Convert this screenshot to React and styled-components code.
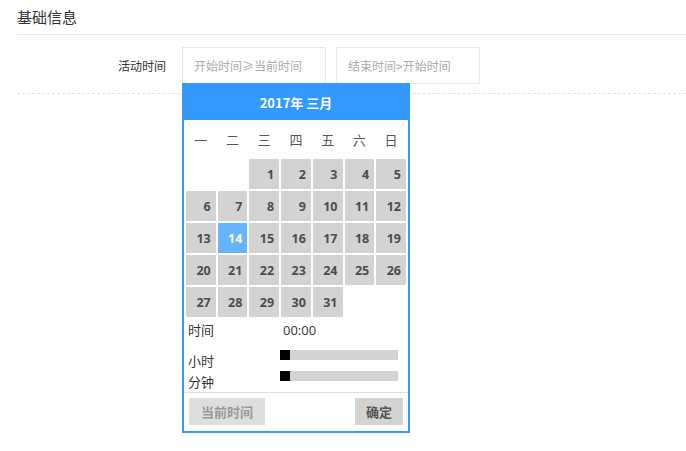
import React from "react";
import styled, { createGlobalStyle } from "styled-components";

const Global = createGlobalStyle`
  html, body { margin: 0; padding: 0; background: #fff; }
  body { font-family: "Noto Sans CJK SC", "Open Sans", sans-serif; color: #333; }
  * { box-sizing: border-box; }
`;

const Page = styled.div`
  padding-left: 17px;
  width: 686px;
  height: 451px;
  overflow: hidden;
`;

const Title = styled.div`
  height: 35px;
  line-height: 33px;
  font-size: 15px;
  color: #333;
  border-bottom: 1px solid #e6e6e6;
`;

const FormRow = styled.div`
  display: flex;
  align-items: center;
  margin-top: 12px;
  padding-bottom: 9px;
  border-bottom: 1px dashed #e3e3e3;
`;

const Label = styled.div`
  width: 149px;
  text-align: right;
  font-size: 12px;
  color: #333;
  margin-right: 16px;
`;

const FieldWrap = styled.div`
  position: relative;
  margin-right: 10px;
`;

const Input = styled.div`
  width: 144px;
  height: 37px;
  border: 1px solid #e8e8e8;
  padding-left: 11px;
  display: flex;
  align-items: center;
  font-size: 12px;
  color: #aaa;
`;

const Popup = styled.div`
  position: absolute;
  top: 36px;
  left: 0;
  width: 228px;
  background: #fff;
  border: 2px solid #3399ff;
  z-index: 2;
`;

const Header = styled.div`
  height: 35px;
  background: #3399ff;
  color: #fff;
  font-weight: bold;
  font-size: 13px;
  display: flex;
  align-items: center;
  justify-content: center;
`;

const Table = styled.table`
  width: 100%;
  border-spacing: 2px;
  table-layout: fixed;
`;

const Th = styled.th`
  height: 35px;
  font-weight: normal;
  font-size: 13px;
  color: #555;
  text-align: center;
  padding: 0;
`;

const Td = styled.td`
  height: 30px;
  padding: 0 5px 0 0;
  text-align: right;
  font-family: "Open Sans", "DejaVu Sans", sans-serif;
  font-weight: bold;
  font-size: 12.5px;
  color: ${(p) => (p.$selected ? "#fff" : "#4d4d4d")};
  background: ${(p) => (p.$empty ? "transparent" : p.$selected ? "#66b3ff" : "#d3d3d3")};
`;

const TimeGrid = styled.div`
  display: grid;
  grid-template-columns: 92px 118px;
  padding-left: 4px;
  margin-top: 1px;
  font-size: 13px;
  color: #333;
`;

const TimeRow = styled.div`
  display: contents;
`;

const TimeLabel = styled.div`
  height: ${(p) => p.$h || 21}px;
  line-height: ${(p) => p.$h || 21}px;
  margin-top: ${(p) => p.$mt || 0}px;
`;

const TimeValue = styled.div`
  height: 20px;
  line-height: 20px;
  padding-left: 3px;
  font-family: "Open Sans", sans-serif;
`;

const Bar = styled.div`
  position: relative;
  height: 10px;
  background: #d3d3d3;
  margin-top: ${(p) => p.$mt || 0}px;
`;

const Handle = styled.div`
  position: absolute;
  left: 0;
  top: 0;
  width: 10px;
  height: 10px;
  background: #000;
`;

const Footer = styled.div`
  border-top: 1px solid #ddd;
  display: flex;
  justify-content: space-between;
  padding: 5px 5px 6px;
`;

const Btn = styled.div`
  height: 27px;
  padding: 0 ${(p) => p.$px}px;
  display: flex;
  align-items: center;
  font-size: 13px;
  font-weight: bold;
  background: ${(p) => (p.$muted ? "#dedede" : "#d3d3d3")};
  color: ${(p) => (p.$muted ? "#999" : "#555")};
`;

const weeks = ["一", "二", "三", "四", "五", "六", "日"];
const days = [null, null, ...Array.from({ length: 31 }, (_, i) => i + 1)];
const rows = [];
for (let i = 0; i < days.length; i += 7) {
  const r = days.slice(i, i + 7);
  while (r.length < 7) r.push(null);
  rows.push(r);
}

export default function App() {
  return (
    <Page>
      <Global />
      <Title>基础信息</Title>
      <FormRow>
        <Label>活动时间</Label>
        <FieldWrap>
          <Input>开始时间≥当前时间</Input>
          <Popup>
            <Header>2017年 三月</Header>
            <Table>
              <thead>
                <tr>
                  {weeks.map((w) => (
                    <Th key={w}>{w}</Th>
                  ))}
                </tr>
              </thead>
              <tbody>
                {rows.map((r, i) => (
                  <tr key={i}>
                    {r.map((d, j) => (
                      <Td key={j} $empty={d === null} $selected={d === 14}>
                        {d}
                      </Td>
                    ))}
                  </tr>
                ))}
              </tbody>
            </Table>
            <TimeGrid>
              <TimeRow>
                <TimeLabel $h={20}>时间</TimeLabel>
                <TimeValue>00:00</TimeValue>
              </TimeRow>
              <TimeRow>
                <TimeLabel $mt={10}>小时</TimeLabel>
                <Bar $mt={10}>
                  <Handle />
                </Bar>
              </TimeRow>
              <TimeRow>
                <TimeLabel>分钟</TimeLabel>
                <Bar>
                  <Handle />
                </Bar>
              </TimeRow>
            </TimeGrid>
            <Footer>
              <Btn $muted $px={12}>当前时间</Btn>
              <Btn $px={11}>确定</Btn>
            </Footer>
          </Popup>
        </FieldWrap>
        <FieldWrap>
          <Input>结束时间&gt;开始时间</Input>
        </FieldWrap>
      </FormRow>
    </Page>
  );
}
